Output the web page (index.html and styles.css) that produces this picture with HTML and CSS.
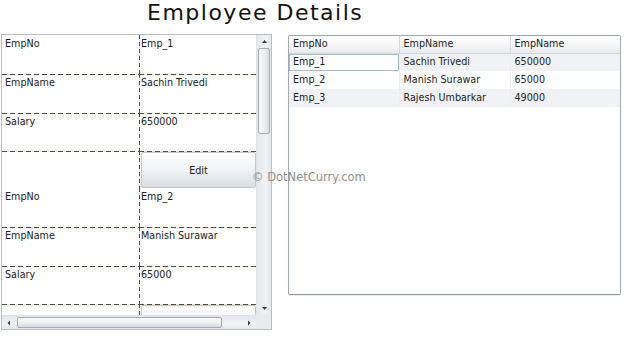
FILE: index.html
```html
<!DOCTYPE html>
<html>
<head>
<meta charset="utf-8">
<title>Employee Details</title>
<link rel="stylesheet" href="styles.css">
</head>
<body>
<div class="page">
  <h1 class="title">Employee Details</h1>
  <div class="main">
    <div class="form-panel">
      <div class="viewport">
        <div class="item">
          <div class="cell label">EmpNo</div><div class="cell value">Emp_1</div>
          <div class="cell label sep">EmpName</div><div class="cell value sep">Sachin Trivedi</div>
          <div class="cell label sep">Salary</div><div class="cell value sep">650000</div>
          <div class="cell label sep"></div><div class="cell value sep btn-cell"><button class="edit">Edit</button></div>
        </div>
        <div class="item">
          <div class="cell label">EmpNo</div><div class="cell value">Emp_2</div>
          <div class="cell label sep">EmpName</div><div class="cell value sep">Manish Surawar</div>
          <div class="cell label sep">Salary</div><div class="cell value sep">65000</div>
          <div class="cell label sep"></div><div class="cell value sep btn-cell"><button class="edit edit-hidden">Edit</button></div>
        </div>
      </div>
      <div class="vscroll">
        <svg class="arrow" width="15" height="13" viewBox="0 0 15 13"><polygon points="5,8 10,8 7.5,5" fill="#3a3a3a"/></svg>
        <div class="vthumb"></div>
        <div class="vspace"></div>
        <svg class="arrow" width="15" height="13" viewBox="0 0 15 13"><polygon points="5,5 10,5 7.5,8" fill="#3a3a3a"/></svg>
      </div>
      <div class="hscroll">
        <svg class="harrow" width="14" height="14" viewBox="0 0 14 14"><polygon points="8,4.5 8,9.5 5.5,7" fill="#3a3a3a"/></svg>
        <div class="hthumb"></div>
        <div class="hspace"></div>
        <svg class="harrow" width="14" height="14" viewBox="0 0 14 14"><polygon points="6,4.5 6,9.5 8.5,7" fill="#3a3a3a"/></svg>
      </div>
      <div class="corner"></div>
    </div>
    <div class="grid-panel">
      <table class="grid">
        <thead>
          <tr><th class="c1">EmpNo</th><th class="c2">EmpName</th><th class="c3">EmpName</th></tr>
        </thead>
        <tbody>
          <tr class="alt"><td class="selected">Emp_1</td><td>Sachin Trivedi</td><td>650000</td></tr>
          <tr><td>Emp_2</td><td>Manish Surawar</td><td>65000</td></tr>
          <tr class="alt"><td>Emp_3</td><td>Rajesh Umbarkar</td><td>49000</td></tr>
        </tbody>
      </table>
    </div>
  </div>
  <div class="watermark">© DotNetCurry.com</div>
</div>
</body>
</html>
```

FILE: styles.css
```css
html, body {
  margin: 0;
  padding: 0;
  background: #ffffff;
}

.page {
  position: relative;
  width: 624px;
  height: 354px;
  font-family: "DejaVu Sans", Verdana, sans-serif;
  color: #222;
}

.title {
  margin: 0;
  height: 34px;
  padding-left: 147px;
  font-family: "DejaVu Sans", sans-serif;
  font-weight: normal;
  font-size: 22px;
  line-height: 26px;
  letter-spacing: 1.5px;
  color: #111;
}

.main {
  display: flex;
  align-items: flex-start;
  padding-left: 1px;
}

/* ---------- left form panel ---------- */
.form-panel {
  display: grid;
  grid-template-columns: 254px 15px;
  grid-template-rows: 280px 14px;
  border: 1px solid #b9bdc3;
  background: #fff;
}

.viewport {
  overflow: hidden;
  font-size: 9.6px;
  line-height: 12px;
}

.item {
  display: grid;
  grid-template-columns: 137px 117px;
  grid-template-rows: 39px 39px 38px 37px;
}

.cell {
  padding: 3px 3px 0 3px;
  background-repeat: no-repeat;
  white-space: nowrap;
}

.value {
  padding-left: 2px;
  background-image: repeating-linear-gradient(180deg, #4a4a4a 0 4px, #efe9c4 4px 7px);
  background-size: 1px 100%;
  background-position: left top;
}

.label.sep {
  background-image: repeating-linear-gradient(90deg, #4a4a4a 0 5px, #efe9c4 5px 8px);
  background-size: 100% 1px;
  background-position: left top;
}

.value.sep {
  background-image:
    repeating-linear-gradient(90deg, #4a4a4a 0 5px, #efe9c4 5px 8px),
    repeating-linear-gradient(180deg, #4a4a4a 0 4px, #efe9c4 4px 7px);
  background-size: 100% 1px, 1px 100%;
  background-position: left top, left top;
}

.btn-cell {
  padding: 1px 0 0 2px;
  display: flex;
}

.edit {
  flex: 1;
  margin: 0;
  border: 1px solid #c4c9cf;
  border-radius: 2px;
  background: linear-gradient(180deg, #ffffff 0%, #f3f4f6 45%, #d9dde2 100%);
  font-family: "DejaVu Sans", Verdana, sans-serif;
  font-size: 9.6px;
  color: #222;
  padding: 0;
}

.edit-hidden {
  align-items: flex-start;
  padding-top: 0;
  line-height: 12px;
}

.vscroll {
  display: flex;
  flex-direction: column;
  align-items: center;
  background: linear-gradient(90deg, #e4e6ea 0%, #f2f3f5 60%, #e6e8eb 100%);
  border-left: 1px solid #e0e2e5;
}

.arrow {
  display: block;
  flex: none;
}

.vthumb {
  width: 10px;
  height: 84px;
  border: 1px solid #a3abb5;
  border-radius: 2px;
  background: linear-gradient(90deg, #fafafa 0%, #eef0f2 50%, #d6dbe0 100%);
  flex: none;
}

.vspace {
  flex: 1;
}

.hscroll {
  display: flex;
  align-items: center;
  background: linear-gradient(180deg, #e4e6ea 0%, #f2f3f5 60%, #e6e8eb 100%);
  border-top: 1px solid #e0e2e5;
}

.harrow {
  display: block;
  flex: none;
}

.hthumb {
  width: 203px;
  height: 9px;
  margin-left: 1px;
  border: 1px solid #a3abb5;
  border-radius: 2px;
  background: linear-gradient(180deg, #fafafa 0%, #eef0f2 50%, #d6dbe0 100%);
  flex: none;
}

.hspace {
  flex: 1;
}

.corner {
  background: #e9eaec;
}

/* ---------- right grid panel ---------- */
.grid-panel {
  margin-left: 16px;
  margin-top: 1px;
  width: 331px;
  height: 258px;
  border: 1px solid #a2a8b0;
  border-bottom-color: #8f979f;
  border-radius: 2px;
  background: #fff;
  box-shadow: 0 1px 1px rgba(0, 0, 0, 0.08);
}

.grid {
  border-collapse: collapse;
  font-size: 9.6px;
  line-height: 12px;
  table-layout: fixed;
  width: 331px;
}

.grid th {
  height: 17px;
  padding: 0 0 0 4px;
  text-align: left;
  font-weight: normal;
  color: #222;
  background: linear-gradient(180deg, #ffffff 0%, #f7f7f8 50%, #e9eaec 100%);
  border-bottom: 1px solid #d3d6da;
  border-right: 1px solid #d6d9dd;
  box-sizing: border-box;
}

.grid th.c1 { width: 110px; }
.grid th.c2 { width: 111px; }
.grid th.c3 { border-right: none; }

.grid td {
  height: 18px;
  padding: 0 0 0 4px;
  box-sizing: border-box;
  border-right: 1px solid #eceef1;
  white-space: nowrap;
  color: #222;
}

.grid td:last-child {
  border-right: none;
}

.grid tr.alt td {
  background: #f1f2f5;
}

.grid tr.alt td.selected {
  background: #ffffff;
  box-shadow: inset 0 0 0 1px #a9c0ca;
}

/* ---------- watermark ---------- */
.watermark {
  position: absolute;
  left: 252px;
  top: 170px;
  font-family: "DejaVu Sans", sans-serif;
  font-size: 11.5px;
  color: #8e8e8e;
  white-space: nowrap;
}
```
